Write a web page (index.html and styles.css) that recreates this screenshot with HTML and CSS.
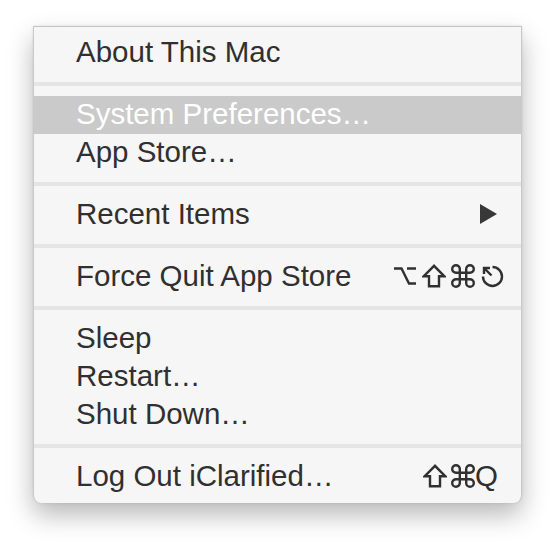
FILE: index.html
```html
<!DOCTYPE html>
<html>
<head>
<meta charset="utf-8">
<link rel="stylesheet" href="styles.css">
</head>
<body>
<div class="menu">
  <div class="item"><span class="label">About This Mac</span></div>
  <div class="sep"></div>
  <div class="item selected"><span class="label">System Preferences…</span></div>
  <div class="item"><span class="label">App Store…</span></div>
  <div class="sep"></div>
  <div class="item"><span class="label">Recent Items</span>
    <svg class="arrow" width="17" height="20" viewBox="0 0 17 20"><polygon points="0,0 17,10 0,20" fill="#383838"/></svg>
  </div>
  <div class="sep"></div>
  <div class="item"><span class="label">Force Quit App Store</span>
    <span class="keys keys-wide">
      <svg class="key" viewBox="0 0 24 24"><path d="M1 4.5H8.5L16 19.5H23M14 4.5H23"/></svg>
      <svg class="key" viewBox="0 0 24 24"><path d="M12 1.8L1.8 12.2H7V22.2H17V12.2H22.2Z"/></svg>
      <svg class="key" viewBox="0 0 24 24"><path d="M15.2 5V19A3.8 3.8 0 1 0 19 15.2H5A3.8 3.8 0 1 0 8.8 19V5A3.8 3.8 0 1 0 5 8.8H19A3.8 3.8 0 1 0 15.2 5"/></svg>
      <svg class="key" viewBox="0 0 24 24"><path d="M4 10V4H10M4 4L11.5 11.5M12.5 3A9.5 9.5 0 1 1 3 12.5"/></svg>
    </span>
  </div>
  <div class="sep"></div>
  <div class="item"><span class="label">Sleep</span></div>
  <div class="item"><span class="label">Restart…</span></div>
  <div class="item"><span class="label">Shut Down…</span></div>
  <div class="sep"></div>
  <div class="item"><span class="label">Log Out iClarified…</span>
    <span class="keys">
      <svg class="key" viewBox="0 0 24 24"><path d="M12 1.8L1.8 12.2H7V22.2H17V12.2H22.2Z"/></svg>
      <svg class="key" viewBox="0 0 24 24"><path d="M15.2 5V19A3.8 3.8 0 1 0 19 15.2H5A3.8 3.8 0 1 0 8.8 19V5A3.8 3.8 0 1 0 5 8.8H19A3.8 3.8 0 1 0 15.2 5"/></svg>
      <span class="q">Q</span>
    </span>
  </div>
</div>
</body>
</html>
```

FILE: styles.css
```css
html, body {
  margin: 0;
  padding: 0;
  background: #ffffff;
}

body {
  font-family: "Liberation Sans", Arial, sans-serif;
  padding-bottom: 40px;
}

.menu {
  margin: 26px 0 0 33px;
  width: 487px;
  background: #f6f6f6;
  border: 1px solid #c9c9c9;
  border-top-color: #c4c4c4;
  border-bottom: none;
  border-radius: 0 0 8px 8px;
  padding: 7px 0 7px 0;
  box-shadow: 0 12px 26px rgba(0, 0, 0, 0.28), 0 0 3px rgba(0, 0, 0, 0.1);
}

.item {
  display: flex;
  align-items: center;
  justify-content: space-between;
  height: 38px;
  padding: 0 23px 0 42px;
  box-sizing: border-box;
  font-size: 29.5px;
  color: #303030;
}

.label {
  line-height: 36px;
  padding-bottom: 2px;
  white-space: nowrap;
}

.item.selected {
  background: #cacaca;
  color: #ffffff;
}

.sep {
  height: 4px;
  margin: 10px 0;
  background: #e5e5e5;
}

.arrow {
  display: block;
  margin-right: 1px;
  margin-top: -2px;
}

.keys {
  display: flex;
  align-items: center;
  gap: 4px;
  margin-top: -3px;
}

.keys-wide {
  gap: 5px;
  margin-right: -6px;
}

.key {
  width: 24px;
  height: 24px;
  display: block;
  fill: none;
  stroke: #303030;
  stroke-width: 2.4;
  stroke-linejoin: miter;
}

.q {
  line-height: 30px;
  margin-left: -4px;
}
```
